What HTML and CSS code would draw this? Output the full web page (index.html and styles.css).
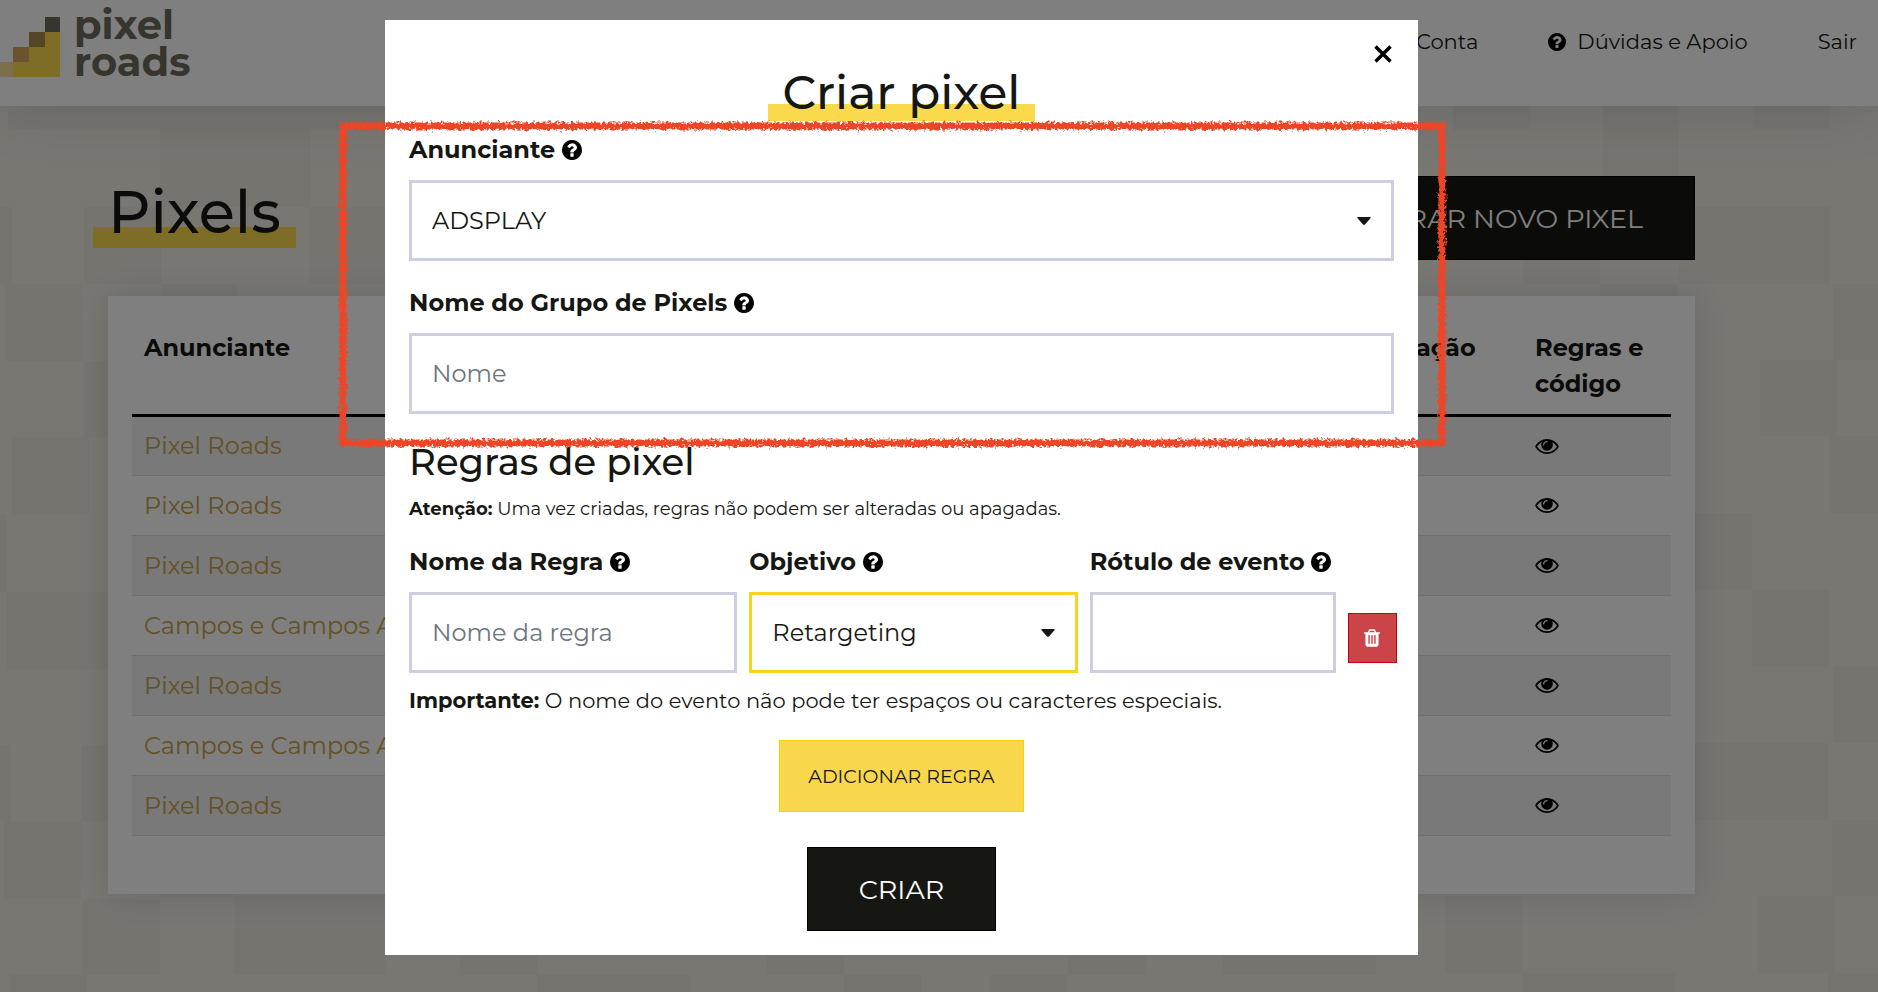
FILE: index.html
```html
<!DOCTYPE html>
<html lang="pt">
<head>
  <meta charset="UTF-8">
  <meta name="viewport" content="width=device-width, initial-scale=1.0">
  <title>Pixel Roads - Pixels</title>
  <link rel="stylesheet" href="styles.css">
</head>
<body>
  <!-- Icon set -->
  <svg class="sprite" aria-hidden="true">
    <symbol id="icon-help" viewBox="128 128 1536 1536">
      <path d="M1024 1376v-192q0-14-9-23t-23-9h-192q-14 0-23 9t-9 23v192q0 14 9 23t23 9h192q14 0 23-9t9-23zm256-672q0-88-55.5-163t-138.5-116-170-41q-243 0-371 213-15 24 8 42l132 100q7 6 19 6 16 0 25-12 53-68 86-92 34-24 86-24 48 0 85.5 26t37.5 59q0 38-20 61t-68 45q-63 28-115.5 86.5t-52.5 125.5v36q0 14 9 23t23 9h192q14 0 23-9t9-23q0-19 21.5-49.5t54.5-49.5q32-18 49-28.5t46-35 44.5-48 28-60.5 12.5-81zm384 192q0 209-103 385.5t-279.5 279.5-385.5 103-385.5-103-279.5-279.5-103-385.5 103-385.5 279.5-279.5 385.5-103 385.5 103 279.5 279.5 103 385.5z"/>
    </symbol>
    <symbol id="icon-eye" viewBox="0 384 1792 1152">
      <path d="M1664 960q-152-236-381-353 61 104 61 225 0 185-131.5 316.5t-316.5 131.5-316.5-131.5-131.5-316.5q0-121 61-225-229 117-381 353 133 205 333.5 326.5t434.5 121.5 434.5-121.5 333.5-326.5zm-720-384q0-20-14-34t-34-14q-125 0-214.5 89.5t-89.5 214.5q0 20 14 34t34 14 34-14 14-34q0-86 61-147t147-61q20 0 34-14t14-34zm848 384q0 34-20 69-140 230-376.5 368.5t-499.5 138.5-499.5-139-376.5-368q-20-35-20-69t20-69q140-229 376.5-368t499.5-139 499.5 139 376.5 368q20 35 20 69z"/>
    </symbol>
    <symbol id="icon-trash" viewBox="192 128 1408 1536">
      <path d="M704 1376v-704q0-14-9-23t-23-9h-64q-14 0-23 9t-9 23v704q0 14 9 23t23 9h64q14 0 23-9t9-23zm256 0v-704q0-14-9-23t-23-9h-64q-14 0-23 9t-9 23v704q0 14 9 23t23 9h64q14 0 23-9t9-23zm256 0v-704q0-14-9-23t-23-9h-64q-14 0-23 9t-9 23v704q0 14 9 23t23 9h64q14 0 23-9t9-23zm-544-992h448l-48-117q-7-9-17-11h-317q-10 2-17 11zm928 32v64q0 14-9 23t-23 9h-96v948q0 83-47 143.5t-113 60.5h-832q-66 0-113-58.5t-47-141.5v-952h-96q-14 0-23-9t-9-23v-64q0-14 9-23t23-9h309l70-167q15-37 54-63t79-26h320q40 0 79 26t54 63l70 167h309q14 0 23 9t9 23z"/>
    </symbol>
  </svg>

  <!-- Checkered backdrop -->
  <svg class="backdrop" viewBox="0 0 1878 992" preserveAspectRatio="xMidYMin slice" aria-hidden="true">
    <path d="M8 53h152v77H8zM160 106h151v101H160zM309 53h77v77h-77zM0 207h12v77H0zM84 207h77v77H84zM309 207h77v77h-77zM5 284h77v77H5zM161 284h76v77h-76zM84 361h77v76H84zM12 437h77v77H12zM0 515h7v77H0zM7 592h101v77H7zM0 745h11v77H0zM82 745h77v77H82zM4 822h77v77H4zM82 899h78v76H82zM160 840h76v57h-76zM234 895h152v80H234zM10 975h77v17H10z"/>
    <path d="M1453 53h77v77h-77zM1603 106h76v101h-76zM1753 53h77v77h-77zM1679 207h151v77h-151zM1523 207h77v77h-77zM1600 284h77v77h-77zM1833 284h45v76h-45zM1760 360h77v76h-77zM1830 436h48v77h-48zM1675 513h77v77h-77zM1752 590h77v77h-77zM1833 666h45v77h-45zM1675 743h153v77h-153zM1832 820h46v76h-46zM1445 896h77v77h-77zM1758 896h77v77h-77zM1523 973h152v19h-152zM1828 973h50v19h-50z"/>
    <path d="M460 898h77v77h-77zM537 975h154v17H537zM767 898h77v77h-77zM844 975h77v17h-77zM990 975h77v17h-77zM1068 898h78v77h-78zM1223 898h153v77h-153z"/>
  </svg>

  <header class="header">
    <a class="logo" href="#">
      <svg class="logo-mark" viewBox="0 0 60 60" aria-hidden="true">
        <path fill="#fada4c" d="M13 60V45h16V30h16V15h15v45z"/>
        <path fill="#fadf94" d="M0 45h13v15H0z"/>
        <path fill="#d7a85a" d="M13 30h16v15H13z"/>
        <path fill="#a98c4a" d="M29 15h16v15H29z"/>
        <path fill="#6d6b5f" d="M45 0h15v15H45z"/>
      </svg>
      <span class="logo-text">pixel<br>roads</span>
    </a>
    <nav class="nav">
      <a href="#">Minha Conta</a>
      <a href="#"><svg class="icon-nav"><use href="#icon-help"/></svg>Dúvidas e Apoio</a>
      <a href="#">Sair</a>
    </nav>
  </header>

  <main class="page">
    <div class="page-head">
      <h1 class="title"><span>Pixels</span></h1>
      <button class="btn btn-dark" type="button">GERAR NOVO PIXEL</button>
    </div>

    <div class="card">
      <table class="table">
        <thead>
          <tr>
            <th class="col-advertiser">Anunciante</th>
            <th>Nome</th>
            <th class="col-date">Criação</th>
            <th class="col-rules">Regras e código</th>
          </tr>
        </thead>
        <tbody>
          <tr><td><a href="#">Pixel Roads</a></td><td></td><td></td><td><button class="view" type="button" aria-label="Ver regras"><svg><use href="#icon-eye"/></svg></button></td></tr>
          <tr><td><a href="#">Pixel Roads</a></td><td></td><td></td><td><button class="view" type="button" aria-label="Ver regras"><svg><use href="#icon-eye"/></svg></button></td></tr>
          <tr><td><a href="#">Pixel Roads</a></td><td></td><td></td><td><button class="view" type="button" aria-label="Ver regras"><svg><use href="#icon-eye"/></svg></button></td></tr>
          <tr><td><a href="#">Campos e Campos A</a></td><td></td><td></td><td><button class="view" type="button" aria-label="Ver regras"><svg><use href="#icon-eye"/></svg></button></td></tr>
          <tr><td><a href="#">Pixel Roads</a></td><td></td><td></td><td><button class="view" type="button" aria-label="Ver regras"><svg><use href="#icon-eye"/></svg></button></td></tr>
          <tr><td><a href="#">Campos e Campos A</a></td><td></td><td></td><td><button class="view" type="button" aria-label="Ver regras"><svg><use href="#icon-eye"/></svg></button></td></tr>
          <tr><td><a href="#">Pixel Roads</a></td><td></td><td></td><td><button class="view" type="button" aria-label="Ver regras"><svg><use href="#icon-eye"/></svg></button></td></tr>
        </tbody>
      </table>
    </div>
  </main>

  <div class="overlay">
    <div class="modal" role="dialog" aria-labelledby="modal-title">
      <button class="close" type="button" aria-label="Fechar">
        <svg viewBox="0 0 16 16"><path d="M2 2l12 12M14 2L2 14"/></svg>
      </button>
      <h2 class="title title-modal" id="modal-title"><span>Criar pixel</span></h2>

      <form class="form">
        <div class="field">
          <label for="advertiser">Anunciante <svg class="icon-help"><use href="#icon-help"/></svg></label>
          <select id="advertiser" class="control">
            <option>ADSPLAY</option>
          </select>
        </div>
        <div class="field">
          <label for="group">Nome do Grupo de Pixels <svg class="icon-help"><use href="#icon-help"/></svg></label>
          <input id="group" class="control" type="text" placeholder="Nome">
        </div>

        <h3 class="subtitle">Regras de pixel</h3>
        <p class="note-small"><strong>Atenção:</strong> Uma vez criadas, regras não podem ser alteradas ou apagadas.</p>

        <div class="rule">
          <div class="field">
            <label for="rule-name">Nome da Regra <svg class="icon-help"><use href="#icon-help"/></svg></label>
            <input id="rule-name" class="control" type="text" placeholder="Nome da regra">
          </div>
          <div class="field">
            <label for="goal">Objetivo <svg class="icon-help"><use href="#icon-help"/></svg></label>
            <select id="goal" class="control active">
              <option>Retargeting</option>
            </select>
          </div>
          <div class="field">
            <label for="event">Rótulo de evento <svg class="icon-help"><use href="#icon-help"/></svg></label>
            <input id="event" class="control" type="text">
          </div>
          <button class="delete" type="button" aria-label="Apagar regra"><svg><use href="#icon-trash"/></svg></button>
        </div>
        <p class="note"><strong>Importante:</strong> O nome do evento não pode ter espaços ou caracteres especiais.</p>

        <div class="actions">
          <button class="btn btn-yellow" type="button">ADICIONAR REGRA</button>
          <button class="btn btn-dark" type="submit">CRIAR</button>
        </div>
      </form>

      <!-- Crayon frame around the first two fields -->
      <svg class="highlight" aria-hidden="true">
        <filter id="crayon" filterUnits="userSpaceOnUse" x="-10" y="-10" width="1300" height="360">
          <feTurbulence type="fractalNoise" baseFrequency="0.35" numOctaves="2" seed="4" result="noise"/>
          <feDisplacementMap in="SourceGraphic" in2="noise" scale="8" xChannelSelector="R" yChannelSelector="G"/>
        </filter>
        <g filter="url(#crayon)">
          <rect width="100%" height="100%"/>
        </g>
      </svg>
    </div>
  </div>
</body>
</html>
```
FILE: styles.css
```css
* {
  box-sizing: border-box;
}

body {
  margin: 0;
  min-height: 100vh;
  background-color: #f1eee5;
  color: #161712;
  font-family: Montserrat, Inter, sans-serif;
  font-size: 24px;
  line-height: 36px;
  overflow: hidden;
}

h1, h2, h3, p {
  margin: 0;
}

a {
  color: inherit;
  text-decoration: none;
}

button, input, select {
  font-family: inherit;
}

.sprite {
  position: absolute;
  width: 0;
  height: 0;
}

.backdrop {
  position: absolute;
  top: 0;
  left: 0;
  width: 100%;
  height: 100%;
  z-index: -1;
  fill: #ebe8df;
}

/* Header */
.header {
  display: flex;
  justify-content: space-between;
  align-items: flex-start;
  height: 106px;
  padding-right: 21px;
  background-color: #fff;
  box-shadow: 0 0 60px rgba(0, 0, 0, 0.15);
}

.logo {
  display: flex;
  gap: 14px;
  padding-top: 6px;
}

.logo-mark {
  width: 60px;
  height: 60px;
  margin-top: 11px;
}

.logo-text {
  color: #6d6b5c;
  font-size: 40px;
  font-weight: 700;
  line-height: 37px;
}

.nav {
  display: flex;
  gap: 70px;
  padding-top: 24px;
  font-size: 21px;
}

.nav a {
  display: flex;
  align-items: center;
}

.icon-nav {
  width: 18px;
  height: 18px;
  margin-right: 11px;
}

/* Page */
.page {
  padding: 70px 183px 40px 108px;
}

.page-head {
  display: flex;
  justify-content: space-between;
  align-items: flex-start;
  margin-bottom: 36px;
}

.title {
  font-size: 59px;
  font-weight: 500;
  line-height: 72px;
}

.title span {
  display: inline-block;
  margin-left: -15px;
  padding: 0 15px;
  background: linear-gradient(#fada4c, #fada4c) no-repeat 0 51px / 100% 21px;
}

.btn {
  height: 84px;
  padding: 0 51px;
  border: 1px solid #000;
  font-size: 27px;
  cursor: pointer;
}

.btn-dark {
  background-color: #161712;
  color: #fff;
}

.btn-yellow {
  height: 72px;
  padding: 0 28px;
  background-color: #f8d74c;
  border-color: #fbd100;
  color: #161712;
  font-size: 19px;
}

.card {
  padding: 22px 24px 58px;
  background-color: #fff;
  box-shadow: 0 0 30px rgba(0, 0, 0, 0.12);
}

.table {
  width: 100%;
  border-collapse: collapse;
  table-layout: fixed;
}

.table th {
  padding: 12px;
  border-bottom: 3px solid #000;
  text-align: left;
  vertical-align: top;
}

.col-advertiser {
  width: 40%;
}

.col-date {
  width: 10%;
}

.col-rules {
  width: 148px;
}

.table td {
  height: 60px;
  padding: 0 12px;
  border-bottom: 1px solid #dedede;
}

.table td a {
  color: #c8a146;
}

.table tbody tr:nth-child(odd) {
  background-color: #f2f2f2;
}

.view {
  display: block;
  padding: 0;
  border: none;
  background: none;
  cursor: pointer;
}

.view svg {
  display: block;
  width: 24px;
  height: 15px;
}

/* Modal */
.overlay {
  position: fixed;
  inset: 0;
  display: flex;
  justify-content: center;
  align-items: flex-start;
  padding: 20px 75px 20px 0;
  background-color: rgba(0, 0, 0, 0.5);
}

.modal {
  position: relative;
  width: 55vw;
  padding: 24px;
  background-color: #fff;
}

.close {
  position: absolute;
  top: 24px;
  right: 25px;
  padding: 0;
  border: none;
  background: none;
  cursor: pointer;
}

.close svg {
  display: block;
  width: 20px;
  height: 20px;
  fill: none;
  stroke: #000;
  stroke-width: 2.8;
}

.title-modal {
  padding-top: 18px;
  font-size: 47px;
  line-height: 61px;
  text-align: center;
}

.title-modal span {
  margin-left: 0;
  background-position: 0 42px;
  background-size: 100% 17px;
}

.form {
  padding-top: 9px;
}

.field {
  margin-bottom: 24px;
}

.field label {
  display: block;
  margin-bottom: 12px;
  font-weight: 700;
}

.icon-help {
  width: 20px;
  height: 20px;
  vertical-align: -2px;
}

.control {
  display: block;
  width: 100%;
  height: 81px;
  padding: 0 20px;
  border: 3px solid #cdcee2;
  border-radius: 0;
  background-color: #fff;
  color: #161712;
  font-size: 24px;
  outline: none;
}

.control::placeholder {
  color: #6c757d;
  opacity: 1;
}

select.control {
  appearance: none;
  background: #fff url("data:image/svg+xml,%3Csvg xmlns='http://www.w3.org/2000/svg' viewBox='0 0 14 8'%3E%3Cpath fill='%23161712' d='M1 0h12q1 0 .6 1L8 7.500q-1 .9-2 0L.4 1Q0 0 1 0z'/%3E%3C/svg%3E") no-repeat right 20px center / 14px 8px;
}

.control.active {
  border-color: #fbd31f;
}

.subtitle {
  margin-top: 20px;
  font-size: 37px;
  font-weight: 500;
  line-height: 48px;
}

.note-small {
  margin-top: 9px;
  font-size: 18px;
  line-height: 28px;
}

.rule {
  display: grid;
  grid-template-columns: 4fr 4fr 3fr 49px;
  gap: 12px;
  margin: 21px -3px 0 0;
}

.rule .field {
  margin-bottom: 10px;
}

.delete {
  display: flex;
  align-items: center;
  justify-content: center;
  align-self: end;
  height: 50px;
  margin-bottom: 20px;
  padding: 0;
  border: 1px solid #c9000b;
  background-color: #cb444a;
  cursor: pointer;
}

.delete svg {
  width: 16px;
  height: 18px;
  fill: #fff;
}

.note {
  font-size: 21px;
}

.actions {
  display: flex;
  flex-direction: column;
  align-items: center;
  gap: 35px;
  padding-top: 21px;
}

.highlight {
  position: absolute;
  top: 106px;
  left: -42px;
  width: calc(100% + 66px);
  height: 317px;
  overflow: visible;
  pointer-events: none;
}

.highlight rect {
  fill: none;
  stroke: #ee4427;
  stroke-width: 7;
}
```
